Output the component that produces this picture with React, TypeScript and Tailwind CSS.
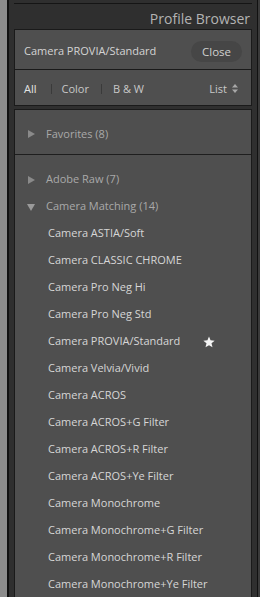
import React from "react";

const font = { fontFamily: '"Open Sans", "Liberation Sans", sans-serif' };

const items = [
  "Camera ASTIA/Soft",
  "Camera CLASSIC CHROME",
  "Camera Pro Neg Hi",
  "Camera Pro Neg Std",
  "Camera PROVIA/Standard",
  "Camera Velvia/Vivid",
  "Camera ACROS",
  "Camera ACROS+G Filter",
  "Camera ACROS+R Filter",
  "Camera ACROS+Ye Filter",
  "Camera Monochrome",
  "Camera Monochrome+G Filter",
  "Camera Monochrome+R Filter",
  "Camera Monochrome+Ye Filter",
];

function Triangle({ open }: { open?: boolean }) {
  return (
    <svg width="8" height="8" viewBox="0 0 8 8" className="shrink-0">
      {open ? (
        <polygon points="0,1 8,1 4,8" fill="#9a9a9a" />
      ) : (
        <polygon points="1,0 8,4 1,8" fill="#8a8a8a" />
      )}
    </svg>
  );
}

function Star() {
  return (
    <svg width="12" height="12" viewBox="0 0 24 24" className="shrink-0">
      <polygon
        points="12,1 15.1,8.6 23.3,9.3 17,14.6 19,22.7 12,18.3 5,22.7 7,14.6 0.7,9.3 8.9,8.6"
        fill="#f4f4f4"
      />
    </svg>
  );
}

function GroupRow({ label, open }: { label: string; open?: boolean }) {
  return (
    <div className="h-[27px] flex items-center pl-[12px] gap-[11px] pt-[2px] text-[11px] text-[#a9a9a9]">
      <Triangle open={open} />
      <span>{label}</span>
    </div>
  );
}

export default function App() {
  return (
    <div className="flex w-[260px] h-[597px] overflow-hidden" style={font}>
      <div className="w-[7px] bg-[#8c8c8c]" />
      <div className="w-[2px] bg-[#111]" />
      <div className="w-[248px] bg-[#2f2f2f] flex flex-col px-[5px]">
        <div className="h-[3px]" />
        <div className="h-[2px] bg-[#151515]" />
        <div className="h-[26px] flex items-center justify-end pr-[2px] pt-[4px] text-[14px] text-[#b3b3b3]">
          Profile Browser
        </div>

        <div className="border border-[#1a1a1a] bg-[#4f4f4f]">
          <div className="h-[39px] flex items-center justify-between pl-[9px] pr-[9px] pt-[3px]">
            <span className="text-[11px] text-[#d4d4d4]">Camera PROVIA/Standard</span>
            <span className="h-[21px] w-[51px] rounded-full bg-[#464646] flex items-center justify-center text-[11.5px] text-[#d0d0d0]">
              Close
            </span>
          </div>
          <div className="h-[1px] bg-[#1a1a1a]" />
          <div className="h-[35px] flex items-center pl-[9px] pr-[13px] pt-[2px] text-[11px] text-[#c8c8c8]">
            <span className="text-[#e4e4e4]">All</span>
            <span className="w-[1px] h-[10px] bg-[#3a3a3a] ml-[14px] mr-[10px]" />
            <span>Color</span>
            <span className="w-[1px] h-[10px] bg-[#3a3a3a] ml-[12px] mr-[11px]" />
            <span>B &amp; W</span>
            <span className="ml-auto flex items-center gap-[5px]">
              List
              <svg width="6" height="9" viewBox="0 0 6 9">
                <polygon points="0,3.5 6,3.5 3,0" fill="#a8a8a8" />
                <polygon points="0,5.5 6,5.5 3,9" fill="#a8a8a8" />
              </svg>
            </span>
          </div>
        </div>

        <div className="h-[3px]" />

        <div className="flex-1 border border-[#1a1a1a] border-b-0 bg-[#4f4f4f] flex flex-col">
          <div className="h-[44px] flex items-center pt-[2px]">
            <div className="w-full">
              <GroupRow label="Favorites (8)" />
            </div>
          </div>
          <div className="h-[1px] bg-[#1e1e1e]" />
          <div className="h-[10px]" />
          <GroupRow label="Adobe Raw (7)" />
          <GroupRow label="Camera Matching (14)" open />
          {items.map((it) => (
            <div
              key={it}
              className="h-[27px] flex items-center pl-[33px] pr-[36px] pt-[2px] text-[11px] text-[#d6d6d6] whitespace-nowrap"
            >
              <span>{it}</span>
              {it === "Camera PROVIA/Standard" && (
                <span className="ml-auto">
                  <Star />
                </span>
              )}
            </div>
          ))}
        </div>
      </div>
      <div className="w-[1px] bg-[#111]" />
      <div className="w-[2px] bg-[#3a3a3a]" />
    </div>
  );
}
